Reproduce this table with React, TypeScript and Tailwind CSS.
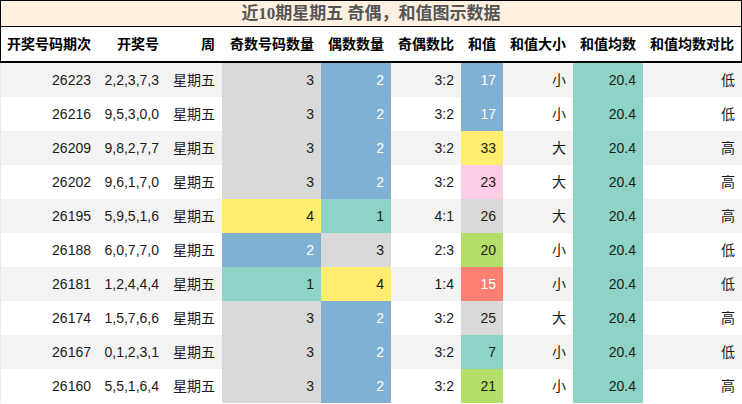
const GRAY = 'bg-[#d9d9d9]'
const BLUE = 'bg-[#80b1d3] text-white'
const TEAL = 'bg-[#8dd3c7]'
const YELLOW = 'bg-[#ffed6f]'
const PINK = 'bg-[#fccde5]'
const GREEN = 'bg-[#b3de69]'
const SALMON = 'bg-[#fb8072] text-white'

const countColor: Record<number, string> = { 1: TEAL, 2: BLUE, 3: GRAY, 4: YELLOW }

const sumColor: Record<number, string> = {
  7: TEAL,
  15: SALMON,
  17: BLUE,
  20: GREEN,
  21: GREEN,
  23: PINK,
  25: GRAY,
  26: GRAY,
  33: YELLOW,
}

type Row = {
  issue: string
  nums: string
  odd: number
  even: number
  sum: number
  size: string
  cmp: string
}

const rows: Row[] = [
  { issue: '26223', nums: '2,2,3,7,3', odd: 3, even: 2, sum: 17, size: '小', cmp: '低' },
  { issue: '26216', nums: '9,5,3,0,0', odd: 3, even: 2, sum: 17, size: '小', cmp: '低' },
  { issue: '26209', nums: '9,8,2,7,7', odd: 3, even: 2, sum: 33, size: '大', cmp: '高' },
  { issue: '26202', nums: '9,6,1,7,0', odd: 3, even: 2, sum: 23, size: '大', cmp: '高' },
  { issue: '26195', nums: '5,9,5,1,6', odd: 4, even: 1, sum: 26, size: '大', cmp: '高' },
  { issue: '26188', nums: '6,0,7,7,0', odd: 2, even: 3, sum: 20, size: '小', cmp: '低' },
  { issue: '26181', nums: '1,2,4,4,4', odd: 1, even: 4, sum: 15, size: '小', cmp: '低' },
  { issue: '26174', nums: '1,5,7,6,6', odd: 3, even: 2, sum: 25, size: '大', cmp: '高' },
  { issue: '26167', nums: '0,1,2,3,1', odd: 3, even: 2, sum: 7, size: '小', cmp: '低' },
  { issue: '26160', nums: '5,5,1,6,4', odd: 3, even: 2, sum: 21, size: '小', cmp: '高' },
]

const headers = ['开奖号码期次', '开奖号', '周', '奇数号码数量', '偶数数量', '奇偶数比', '和值', '和值大小', '和值均数', '和值均数对比']

// header sits inside 1px side borders, so its outer columns are 1px narrower
const headCols = 'grid grid-cols-[97px_68px_56px_99px_70px_70px_42px_70px_70px_98px]'
const cols = 'grid grid-cols-[97px_68px_56px_99px_70px_70px_42px_70px_70px_99px]'

function Cell({ children, className = '' }: { children: React.ReactNode; className?: string }) {
  return <div className={`flex items-center justify-end pr-[7px] ${className}`}>{children}</div>
}

export default function App() {
  return (
    <div
      className="w-[742px] h-[404px] overflow-hidden bg-white text-[14px] text-[#1a1a1a]"
      style={{ fontFamily: '"Liberation Sans", "Noto Sans CJK SC", sans-serif' }}
    >
      <div
        className="flex h-[27px] items-center justify-center border border-black bg-[#fdf0e1] text-[17px] font-bold text-[#555]"
        style={{ fontFamily: '"Liberation Serif", "Noto Sans CJK SC", serif' }}
      >
        近10期星期五 奇偶，和值图示数据
      </div>
      <div className={`${headCols} h-[36px] border-x border-b-2 border-black font-bold text-black`}>
        {headers.map((h) => (
          <Cell key={h}>{h}</Cell>
        ))}
      </div>
      <div className="border-l border-[#ebebeb]">
        {rows.map((r, i) => (
          <div key={r.issue} className={`${cols} h-[34px] ${i % 2 === 0 ? 'bg-[#f3f3f3]' : 'bg-white'}`}>
            <Cell>{r.issue}</Cell>
            <Cell>{r.nums}</Cell>
            <Cell>星期五</Cell>
            <Cell className={countColor[r.odd]}>{r.odd}</Cell>
            <Cell className={countColor[r.even]}>{r.even}</Cell>
            <Cell>{`${r.odd}:${r.even}`}</Cell>
            <Cell className={sumColor[r.sum]}>{r.sum}</Cell>
            <Cell>{r.size}</Cell>
            <Cell className={TEAL}>20.4</Cell>
            <Cell>{r.cmp}</Cell>
          </div>
        ))}
      </div>
    </div>
  )
}
